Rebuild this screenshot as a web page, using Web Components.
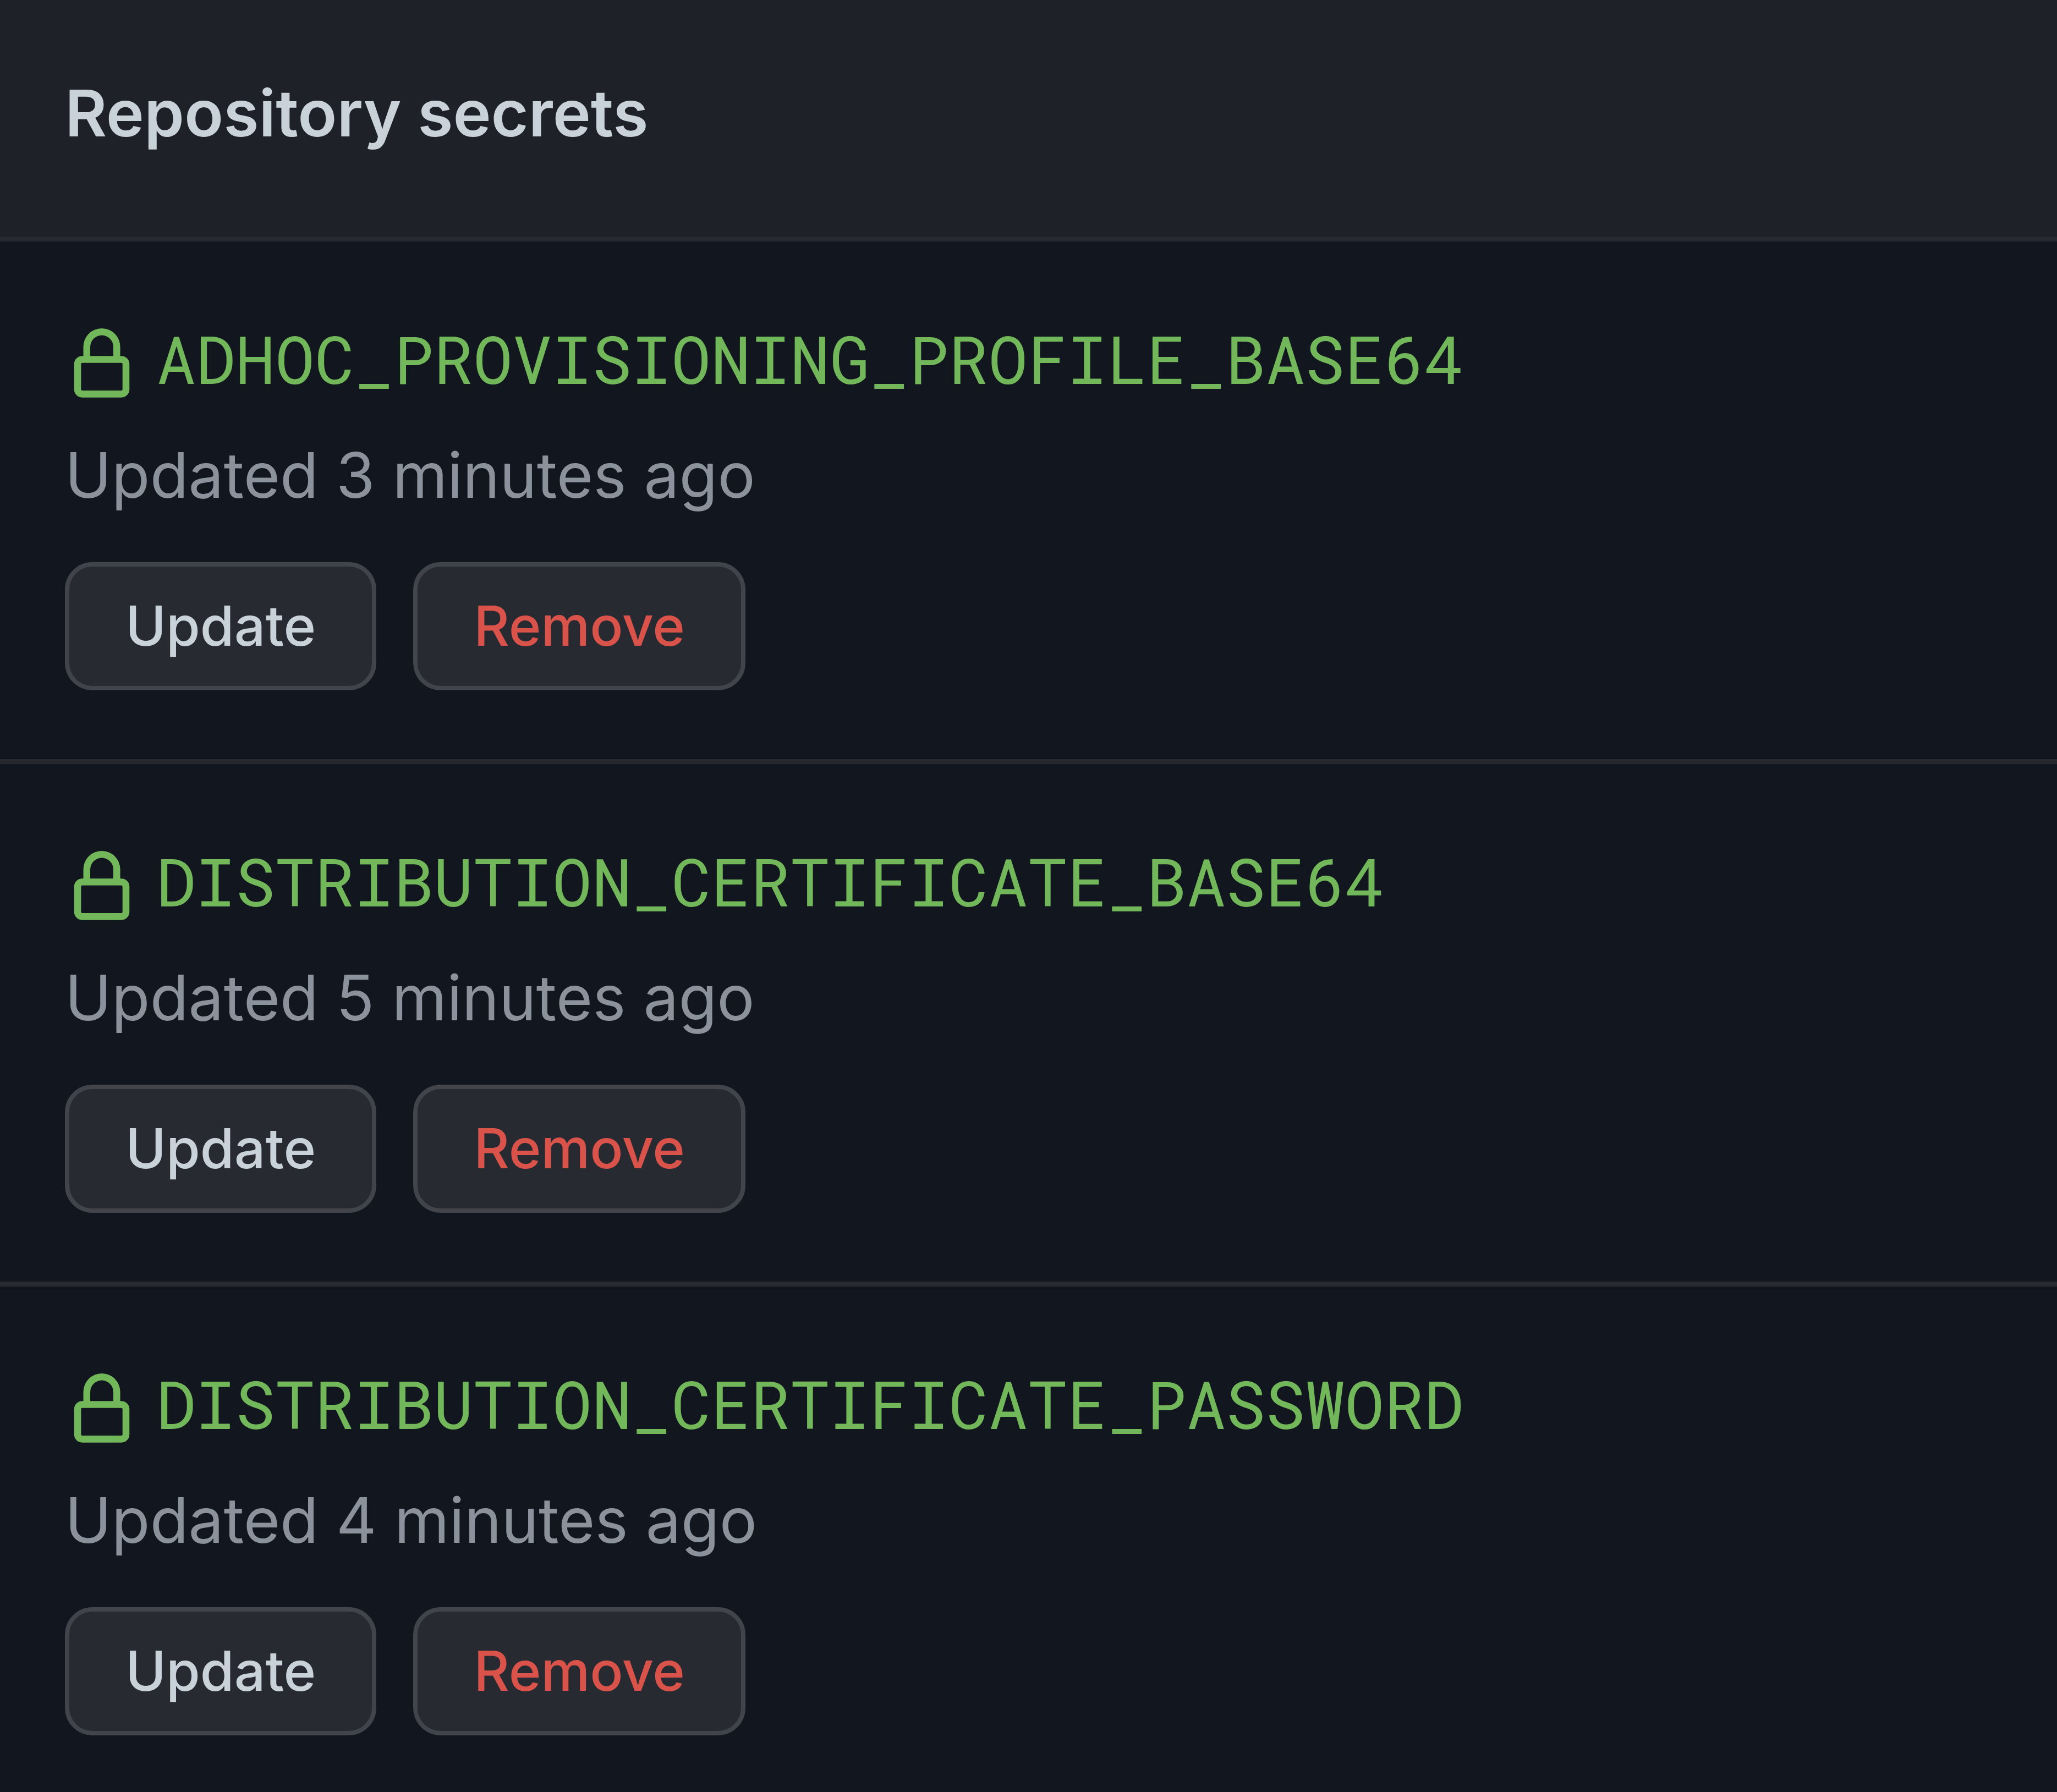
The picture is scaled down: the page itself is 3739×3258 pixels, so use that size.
<!DOCTYPE html>
<html lang="en">
<head>
<meta charset="utf-8">
<title>Repository secrets</title>
<style>
  body { margin: 0; background: #12161e; color: #c9d1d9; font-family: Inter, "Liberation Sans", sans-serif; font-size: 114px; line-height: 168px; }
</style>
</head>
<body>
<secrets-panel>
  <span slot="title">Repository secrets</span>
  <secret-row><span slot="name">ADHOC_PROVISIONING_PROFILE_BASE64</span><span slot="updated">Updated 3 minutes ago</span></secret-row>
  <secret-row><span slot="name">DISTRIBUTION_CERTIFICATE_BASE64</span><span slot="updated">Updated 5 minutes ago</span></secret-row>
  <secret-row><span slot="name">DISTRIBUTION_CERTIFICATE_PASSWORD</span><span slot="updated">Updated 4 minutes ago</span></secret-row>
</secrets-panel>

<template id="panel">
  <style>
    :host { display: block; overflow: hidden; }
    header { background: #1f2129; padding: 122px 118px 140px; }
    h2 { margin: 0; font-size: 117px; font-weight: 600; }
  </style>
  <header><h2><slot name="title"></slot></h2></header>
  <slot></slot>
</template>

<template id="row">
  <style>
    :host { display: flex; flex-direction: column; border-top: 9px solid #262930; padding: 129px 118px 125px; }
    :host(:last-of-type) { padding-bottom: 103px; }
    .name { display: flex; align-items: center; gap: 32px; color: #72b75a; }
    code { font-family: "Roboto Mono", "DejaVu Sans Mono", monospace; font-size: 120px; }
    p { margin: 44px 0 0; color: #8c929c; }
    .actions { display: flex; gap: 67px; margin-top: 74px; }
  </style>
  <div class="name"><lock-icon></lock-icon><code><slot name="name"></slot></code></div>
  <p><slot name="updated"></slot></p>
  <div class="actions">
    <action-button>Update</action-button>
    <action-button danger>Remove</action-button>
  </div>
</template>

<template id="lock">
  <style>
    :host { display: block; padding-top: 24px; flex: none; }
    svg { display: block; width: 134px; height: 134px; fill: currentColor; }
  </style>
  <svg viewBox="0 0 16 16" aria-hidden="true"><path fill-rule="evenodd" d="M4 4v2h-.25A1.75 1.75 0 002 7.75v5.5c0 .966.784 1.75 1.75 1.75h8.5A1.75 1.75 0 0014 13.25v-5.5A1.75 1.75 0 0012.25 6H12V4a4 4 0 10-8 0zm6.5 2V4a2.5 2.5 0 10-5 0v2h5zM12 7.5h.25a.25.25 0 01.25.25v5.5a.25.25 0 01-.25.25h-8.5a.25.25 0 01-.25-.25v-5.5a.25.25 0 01.25-.25H12z"/></svg>
</template>

<template id="action">
  <style>
    :host { display: block; }
    button { display: block; margin: 0; box-sizing: border-box; padding: 36px 102px 37px; border: 8px solid #41444b; border-radius: 50px; background: #282a32; color: #c9d1d9; font: 500 100px/144px Inter, "Liberation Sans", sans-serif; cursor: pointer; }
    :host([danger]) button { color: #da534b; }
  </style>
  <button type="button"><slot></slot></button>
</template>

<script>
  const register = (tag, id) => customElements.define(tag, class extends HTMLElement {
    constructor() {
      super();
      this.attachShadow({ mode: "open" }).append(document.getElementById(id).content.cloneNode(true));
    }
  });
  register("lock-icon", "lock");
  register("action-button", "action");
  register("secret-row", "row");
  register("secrets-panel", "panel");
</script>
</body>
</html>
